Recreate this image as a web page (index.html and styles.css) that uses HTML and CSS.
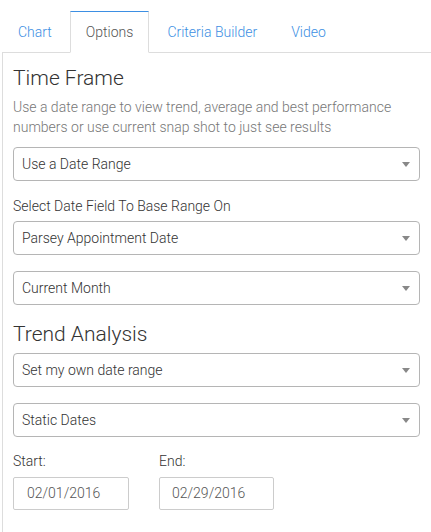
FILE: index.html
```html
<!DOCTYPE html>
<html>
<head>
<meta charset="utf-8">
<link rel="stylesheet" href="styles.css">
</head>
<body>
<div class="wrap">
  <ul class="tabs">
    <li class="tab"><a>Chart</a></li>
    <li class="tab active"><a>Options</a></li>
    <li class="tab"><a>Criteria Builder</a></li>
    <li class="tab"><a>Video</a></li>
  </ul>
  <div class="panel">
    <h2 class="heading">Time Frame</h2>
    <p class="desc">Use a date range to view trend, average and best performance numbers or use current snap shot to just see results</p>
    <div class="select"><span>Use a Date Range</span><i class="caret"></i></div>
    <div class="label">Select Date Field To Base Range On</div>
    <div class="select"><span>Parsey Appointment Date</span><i class="caret"></i></div>
    <div class="select"><span>Current Month</span><i class="caret"></i></div>
    <h2 class="heading trend">Trend Analysis</h2>
    <div class="select"><span>Set my own date range</span><i class="caret"></i></div>
    <div class="select"><span>Static Dates</span><i class="caret"></i></div>
    <div class="dates">
      <div class="field">
        <div class="flabel">Start:</div>
        <div class="input start">02/01/2016</div>
      </div>
      <div class="field">
        <div class="flabel">End:</div>
        <div class="input end">02/29/2016</div>
      </div>
    </div>
  </div>
</div>
</body>
</html>
```

FILE: styles.css
```css
html, body {
  margin: 0;
  padding: 0;
  background: #fff;
}
body {
  font-family: Roboto, "Liberation Sans", sans-serif;
  font-size: 14px;
  font-weight: 300;
  color: #333;
  width: 431px;
  height: 532px;
  overflow: hidden;
}
.wrap {
  padding: 11px 0 0 2px;
}
.tabs {
  list-style: none;
  margin: 0;
  padding: 0;
  display: flex;
  gap: 2px;
  border-bottom: 1px solid #ddd;
  height: 41px;
  font-size: 14px;
}
.tab {
  margin-bottom: -1px;
}
.tab a {
  display: block;
  box-sizing: border-box;
  height: 42px;
  padding: 0 15px;
  line-height: 41px;
  color: #3d8fe3;
  border: 1px solid transparent;
}
.tab.active a {
  color: #555;
  background: #fff;
  border-color: #ddd;
  border-top: 1px solid #3d8fe3;
  border-bottom-color: #fff;
}
.panel {
  border-left: 1px solid #ddd;
  padding: 0 11px 30px 10px;
}
.heading {
  margin: 0;
  padding-top: 12px;
  font-size: 21px;
  font-weight: 300;
  line-height: 26px;
  color: #333;
}
.desc {
  margin: 6px 0 0 0;
  line-height: 20px;
  color: #777;
}
.select {
  box-sizing: border-box;
  height: 34px;
  border: 1px solid #b5b5b5;
  border-radius: 4px;
  display: flex;
  align-items: center;
  justify-content: space-between;
  padding: 0 8px 0 8px;
  margin-top: 16px;
  color: #333;
}
.desc + .select {
  margin-top: 10px;
}
.caret {
  width: 0;
  height: 0;
  border-left: 4px solid transparent;
  border-right: 4px solid transparent;
  border-top: 5px solid #888;
  margin-right: 1px;
}
.label {
  margin-top: 15px;
  line-height: 20px;
}
.label + .select {
  margin-top: 5px;
}
.heading.trend {
  padding-top: 16px;
}
.heading.trend + .select {
  margin-top: 6px;
}
.dates {
  display: flex;
  gap: 30px;
  margin-top: 14px;
}
.flabel {
  line-height: 20px;
}
.input {
  box-sizing: border-box;
  height: 33px;
  margin-top: 6px;
  border: 1px solid #ccc;
  border-radius: 2px;
  padding: 0 0 0 13px;
  line-height: 31px;
  color: #555;
}
.input.start {
  width: 116px;
}
.input.end {
  width: 115px;
  padding-left: 12px;
}
```
